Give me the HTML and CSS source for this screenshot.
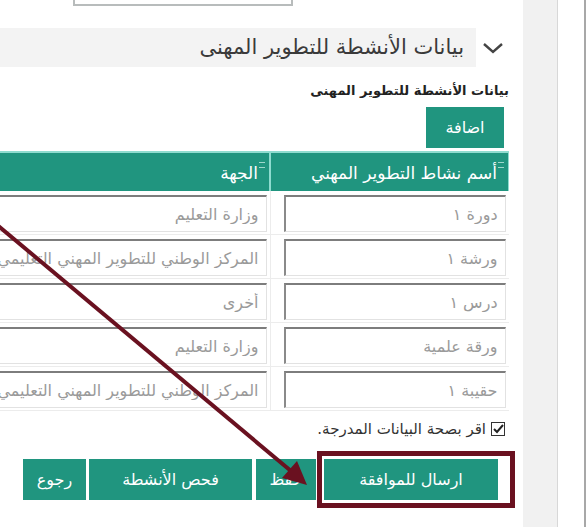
FILE: index.html
```html
<!DOCTYPE html>
<html lang="ar" dir="rtl">
<head>
    <meta charset="UTF-8">
    <meta name="viewport" content="width=device-width, initial-scale=1.0">
    <title>بيانات الأنشطة للتطوير المهني</title>
    <link rel="stylesheet" href="styles.css">
</head>
<body>

    <div class="page">
        <div class="edge"></div>
        <div class="rail"></div>

        <div class="main">
            <div class="top-field"></div>

            <!-- عنوان القسم -->
            <div class="section-head">
                <svg class="chevron" width="22" height="14" viewBox="0 0 22 14">
                    <polyline points="2,3 11,11 20,3" fill="none" stroke="#444" stroke-width="2.4"/>
                </svg>
                <div class="section-title">بيانات الأنشطة للتطوير المهنى</div>
            </div>

            <div class="sub-title">بيانات الأنشطة للتطوير المهنى</div>

            <div class="add-row">
                <button class="btn add">اضافة</button>
            </div>

            <table class="grid">
                <thead>
                    <tr>
                        <th class="col-name"><span class="sort"></span>أسم نشاط التطوير المهني</th>
                        <th class="col-org"><span class="sort"></span>الجهة</th>
                    </tr>
                </thead>
                <tbody>
                    <tr>
                        <td><input type="text" placeholder="دورة ١"></td>
                        <td><input type="text" placeholder="وزارة التعليم"></td>
                    </tr>
                    <tr>
                        <td><input type="text" placeholder="ورشة ١"></td>
                        <td><input type="text" placeholder="المركز الوطني للتطوير المهني التعليمي"></td>
                    </tr>
                    <tr>
                        <td><input type="text" placeholder="درس ١"></td>
                        <td><input type="text" placeholder="أخرى"></td>
                    </tr>
                    <tr>
                        <td><input type="text" placeholder="ورقة علمية"></td>
                        <td><input type="text" placeholder="وزارة التعليم"></td>
                    </tr>
                    <tr>
                        <td><input type="text" placeholder="حقيبة ١"></td>
                        <td><input type="text" placeholder="المركز الوطني للتطوير المهني التعليمي"></td>
                    </tr>
                </tbody>
            </table>

            <div class="confirm">
                <span class="tick">
                    <svg width="11" height="10" viewBox="0 0 11 10">
                        <polyline points="1,5 4,8 10,1" fill="none" stroke="#222" stroke-width="2"/>
                    </svg>
                </span>
                <span>اقر بصحة البيانات المدرجة.</span>
            </div>

            <div class="actions">
                <button class="btn send">ارسال للموافقة</button>
                <button class="btn save">حفظ</button>
                <button class="btn check">فحص الأنشطة</button>
                <button class="btn back">رجوع</button>
            </div>
        </div>
    </div>

    <!-- تعليم على الصورة -->
    <div class="mark-box"></div>
    <svg class="arrow" width="586" height="527" viewBox="0 0 586 527">
        <line x1="-4" y1="224" x2="291" y2="471" stroke="#6a1120" stroke-width="4"/>
        <polygon points="307,485 282,478 297,461" fill="#6a1120"/>
    </svg>

</body>
</html>
```

FILE: styles.css
```css
html, body {
    margin: 0;
    padding: 0;
    overflow: hidden;
}
body {
    font-family: "DejaVu Sans", "Noto Sans", sans-serif;
    background: #fff;
    color: #333;
    direction: rtl;
    width: 586px;
    height: 527px;
    position: relative;
}
.page {
    display: flex;
    height: 527px;
}
.edge {
    flex: none;
    width: 26px;
    border-right: 2px solid #a8a8a8;
    background: #fff;
}
.rail {
    flex: none;
    width: 34px;
    background: #f1f1f1;
    border-right: 1px solid #d8d8d8;
}
.main {
    flex: none;
    width: 700px;
    padding-right: 14px;
    box-sizing: border-box;
}
.top-field {
    width: 216px;
    height: 4px;
    margin-right: 216px;
    border: 2px solid #b8bcbc;
    border-top: none;
}
.section-head {
    display: flex;
    align-items: center;
    margin-top: 22px;
    padding-right: 5px;
    height: 39px;
}
.chevron {
    flex: none;
    margin-left: 6px;
}
.section-title {
    flex: 1;
    height: 39px;
    line-height: 39px;
    background: #f3f3f3;
    padding-right: 12px;
    font-size: 21px;
    color: #3a3a3a;
}
.sub-title {
    margin-top: 16px;
    font-size: 13px;
    font-weight: bold;
    line-height: 16px;
    color: #222;
}
.add-row {
    margin-top: 8px;
    padding-right: 5px;
    display: flex;
}
.btn {
    font-family: inherit;
    background: #20957f;
    color: #fff;
    border: none;
    font-size: 16px;
    padding: 0;
    cursor: pointer;
}
.add {
    width: 78px;
    height: 41px;
}
.grid {
    width: 686px;
    margin-top: 3px;
    border-collapse: collapse;
    table-layout: fixed;
}
.grid th {
    background: #20957f;
    color: #fff;
    font-weight: normal;
    font-size: 17px;
    height: 38px;
    text-align: right;
    padding: 0 4px 0 0;
    border-top: 2px solid #8fdccf;
    border-left: 2px solid #8fdccf;
    border-right: 1px solid #8fdccf;
}
.col-name {
    width: 233px;
}
.sort {
    display: inline-block;
    width: 6px;
    height: 4px;
    border-top: 1px solid #9fd8cc;
    border-bottom: 1px solid #9fd8cc;
    vertical-align: 11px;
    margin-left: 1px;
}
.grid td {
    padding: 4px 3px 2px 13px;
    border-bottom: 1px solid #ececec;
    border-left: 1px solid #ececec;
}
.grid input {
    width: 100%;
    height: 37px;
    box-sizing: border-box;
    font-family: inherit;
    font-size: 16px;
    padding: 0 7px;
    border-top: 2px solid #7d7d7d;
    border-left: 2px solid #8a8a8a;
    border-bottom: 1px solid #e2e2e2;
    border-right: 1px solid #e2e2e2;
    background: #fff;
    outline: none;
}
.grid input::placeholder {
    color: #9a9a9a;
}
.confirm {
    display: flex;
    align-items: center;
    gap: 5px;
    margin-top: 9px;
    padding-right: 4px;
    font-size: 15px;
    line-height: 18px;
    color: #333;
}
.tick {
    width: 12px;
    height: 12px;
    border: 1.5px solid #333;
    display: flex;
    align-items: center;
    justify-content: center;
}
.actions {
    display: flex;
    margin-top: 21px;
    padding-right: 11px;
}
.actions .btn {
    height: 41px;
}
.send {
    width: 174px;
    margin-left: 8px;
}
.save {
    width: 60px;
    margin-left: 4px;
}
.check {
    width: 163px;
    margin-left: 3px;
}
.back {
    width: 63px;
}
.mark-box {
    position: absolute;
    left: 317px;
    top: 451px;
    width: 188px;
    height: 47px;
    border: 5px solid #6a1120;
}
.arrow {
    position: absolute;
    left: 0;
    top: 0;
}
```
